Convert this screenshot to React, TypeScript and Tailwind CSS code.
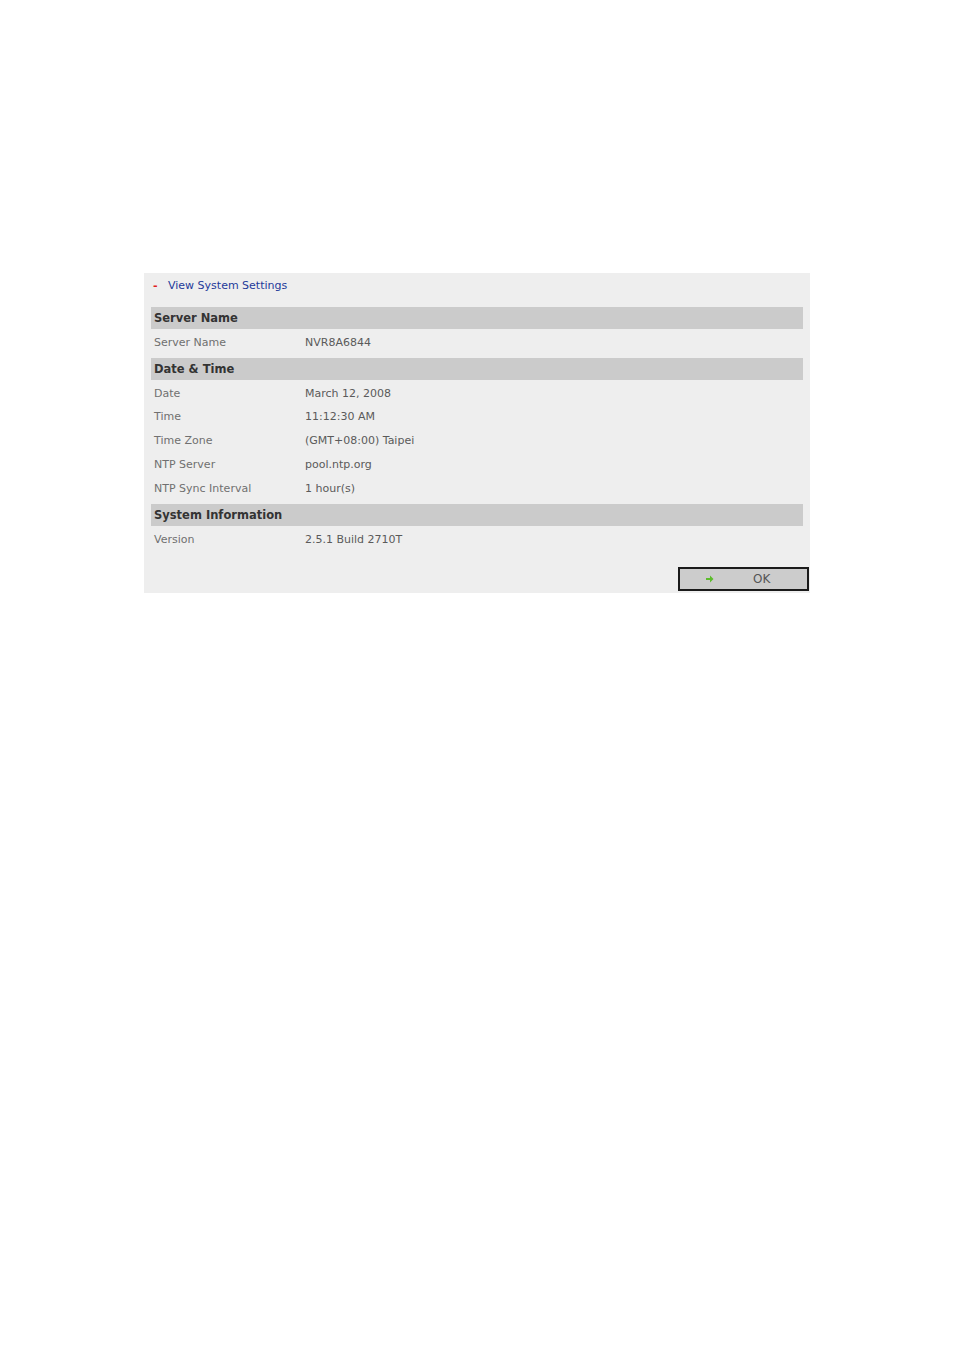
const sections = [
  { title: 'Server Name', rows: [['Server Name', 'NVR8A6844']] },
  {
    title: 'Date & Time',
    rows: [
      ['Date', 'March 12, 2008'],
      ['Time', '11:12:30 AM'],
      ['Time Zone', '(GMT+08:00) Taipei'],
      ['NTP Server', 'pool.ntp.org'],
      ['NTP Sync Interval', '1 hour(s)'],
    ],
  },
  { title: 'System Information', rows: [['Version', '2.5.1 Build 2710T']] },
]

export default function App() {
  return (
    <div className="min-h-[1350px] w-[954px] bg-white pt-[273px] pl-[144px] font-['DejaVu_Sans',sans-serif] text-[11px]">
      <div className="w-[666px] h-[320px] bg-[#eeeeee] flex flex-col">
        {/* Title */}
        <div className="h-[34px] flex items-start pt-[5px] pl-[9px]">
          <span className="text-[#e02020] w-[15px] leading-[16px] font-bold">-</span>
          <span className="text-[#1e3a9a] text-[11px] leading-[16px]">View System Settings</span>
        </div>

        <div className="px-[7px] flex flex-col">
          {sections.map((s, i) => (
            <div key={s.title} className={i > 0 ? 'mt-[3.5px]' : ''}>
              <div className="h-[22px] bg-[#cbcbcb] flex items-center pl-[3px] pt-[1px] font-bold text-[#333333] text-[11.5px]">
                {s.title}
              </div>
              <div className="pt-[2px]">
                {s.rows.map(([label, value]) => (
                  <div key={label} className="h-[23.7px] flex items-center pl-[3px]">
                    <span className="w-[151px] text-[#707070]">{label}</span>
                    <span className="text-[#5a5a5a]">{value}</span>
                  </div>
                ))}
              </div>
            </div>
          ))}
        </div>

        <div className="flex-1" />
        <div className="flex justify-end pr-[1px] pb-[2px]">
          <button className="w-[131px] h-[24px] bg-[#cccccc] border-2 border-[#1a1a1a] flex items-center text-[#555555] text-[12px]">
            <svg width="8" height="8" viewBox="0 0 8 8" className="ml-[26px]">
              <path d="M0 3h4V0.5L7.5 4 4 7.5V5H0z" fill="#5cbc2c" />
            </svg>
            <span className="ml-[39px]">OK</span>
          </button>
        </div>
      </div>
    </div>
  )
}
